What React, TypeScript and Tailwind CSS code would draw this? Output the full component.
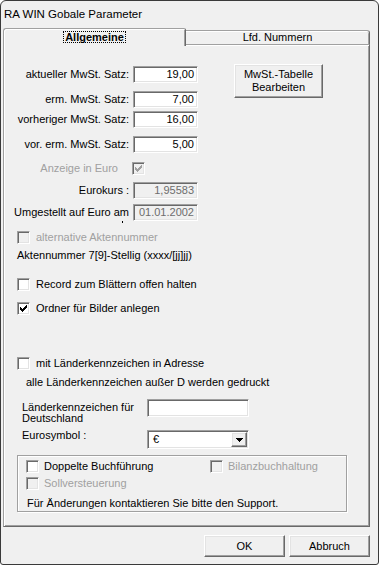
import React from "react";

const sunken =
  "border border-t-[#a0a0a0] border-l-[#a0a0a0] border-b-white border-r-white shadow-[inset_1px_1px_0_#696969,inset_-1px_-1px_0_#e3e3e3]";
const raised =
  "border border-t-white border-l-white border-b-[#696969] border-r-[#696969] shadow-[inset_-1px_-1px_0_#a0a0a0,inset_1px_1px_0_#e3e3e3]";

function Check({ color }: { color: string }) {
  return (
    <svg width="7" height="7" viewBox="0 0 7 7" shapeRendering="crispEdges" fill={color}>
      <rect x="6" y="0" width="1" height="1" />
      <rect x="5" y="1" width="2" height="1" />
      <rect x="0" y="2" width="1" height="1" />
      <rect x="4" y="2" width="3" height="1" />
      <rect x="0" y="3" width="2" height="1" />
      <rect x="3" y="3" width="3" height="1" />
      <rect x="0" y="4" width="5" height="1" />
      <rect x="1" y="5" width="3" height="1" />
      <rect x="2" y="6" width="1" height="1" />
    </svg>
  );
}

function CheckBox({ checked = false, disabled = false }: { checked?: boolean; disabled?: boolean }) {
  return (
    <div
      className={`w-[13px] h-[13px] shrink-0 flex items-center justify-center ${sunken} ${
        disabled ? "bg-[#f0f0f0]" : "bg-white"
      }`}
    >
      {checked && <Check color={disabled ? "#a0a0a0" : "#000000"} />}
    </div>
  );
}

function NumField({ value, disabled = false }: { value: string; disabled?: boolean }) {
  return (
    <div
      className={`ml-[4px] w-[65px] h-[17px] flex items-center justify-end pr-[3px] ${sunken} ${
        disabled ? "bg-[#f0f0f0] text-[#6d6d6d]" : "bg-white text-black"
      }`}
    >
      {value}
    </div>
  );
}

function Row({ label, value, mt, disabled }: { label: string; value: string; mt: string; disabled?: boolean }) {
  return (
    <div className={`flex items-center h-[17px] ${mt}`}>
      <div className="w-[125px] text-right whitespace-nowrap">{label}</div>
      <NumField value={value} disabled={disabled} />
    </div>
  );
}

export default function App() {
  return (
    <div className="w-[379px] h-[565px] bg-[#f0f0f0] border border-[#3a3a3a] rounded-t-[6px] rounded-b-[3px] flex flex-col overflow-hidden text-[11px] leading-[13px] text-black font-['Liberation_Sans',Arial,sans-serif]">
      {/* Title bar */}
      <div className="h-[27px] shrink-0 flex items-center pl-[3px] text-[11.5px]">RA WIN Gobale Parameter</div>

      {/* Tabs */}
      <div className="h-[16px] shrink-0 flex items-end ml-[2px]">
        <div className="relative z-10 self-start h-[18px] w-[183px] bg-[#f0f0f0] border-t border-l border-r border-t-[#a0a0a0] border-l-[#a0a0a0] border-r-[#696969] rounded-tl-[3px] rounded-tr-[2px] shadow-[inset_1px_1px_0_#ffffff,inset_-1px_0_0_#a0a0a0] flex justify-center pt-[2px]">
          <span className="h-[12px] leading-[10px] font-bold border border-dotted border-black px-[1px]">Allgemeine</span>
        </div>
        <div className="h-[14px] w-[184px] bg-[#f0f0f0] border-t border-r border-t-[#a0a0a0] border-r-[#696969] rounded-tr-[3px] shadow-[inset_0_1px_0_#ffffff,inset_-1px_0_0_#a0a0a0] flex items-center justify-center">
          Lfd. Nummern
        </div>
      </div>

      {/* Panel */}
      <div className="ml-[2px] w-[367px] h-[483px] shrink-0 border border-t-[#a0a0a0] border-l-[#a0a0a0] border-r-[#696969] border-b-[#696969] shadow-[inset_1px_1px_0_#ffffff,inset_-1px_-1px_0_#a0a0a0] flex flex-col">
        <div className="flex">
          <div className="flex flex-col pt-[21px]">
            <Row label="aktueller MwSt. Satz:" value="19,00" mt="mt-0" />
            <Row label="erm. MwSt. Satz:" value="7,00" mt="mt-[8px]" />
            <Row label="vorheriger MwSt. Satz:" value="16,00" mt="mt-[3px]" />
            <Row label="vor. erm. MwSt. Satz:" value="5,00" mt="mt-[8px]" />
            <div className="flex items-center h-[13px] mt-[9px]">
              <div className="w-[114px] text-right text-[#a0a0a0] whitespace-nowrap">Anzeige in Euro</div>
              <div className="ml-[14px]">
                <CheckBox checked disabled />
              </div>
            </div>
            <Row label="Eurokurs :" value="1,95583" mt="mt-[7px]" disabled />
            <div className="flex items-center h-[17px] mt-[5px]">
              <div className="relative w-[125px] text-right whitespace-nowrap">
                Umgestellt auf Euro am
                <span className="absolute right-[6px] top-[15px] w-[1px] h-[2px] bg-black"></span>
              </div>
              <NumField value="01.01.2002" disabled />
            </div>
          </div>
          <div className="ml-[36px] mt-[19px]">
            <div className={`w-[89px] h-[34px] flex flex-col items-center justify-center bg-[#f0f0f0] ${raised}`}>
              <span>MwSt.-Tabelle</span>
              <span>Bearbeiten</span>
            </div>
          </div>
        </div>

        <div className="flex flex-col pl-[13px]">
          <div className="flex items-center h-[13px] mt-[10px] gap-[6px]">
            <CheckBox disabled />
            <span className="text-[#a0a0a0]">alternative Aktennummer</span>
          </div>
          <div className="flex items-center h-[13px] mt-[5px]">Aktennummer 7[9]-Stellig (xxxx/[jj]jj)</div>
          <div className="flex items-center h-[13px] mt-[16px] gap-[6px]">
            <CheckBox />
            <span>Record zum Blättern offen halten</span>
          </div>
          <div className="flex items-center h-[13px] mt-[11px] gap-[6px]">
            <CheckBox checked />
            <span>Ordner für Bilder anlegen</span>
          </div>
          <div className="flex items-center h-[13px] mt-[42px] gap-[6px]">
            <CheckBox />
            <span>mit Länderkennzeichen in Adresse</span>
          </div>
          <div className="flex items-center h-[13px] mt-[6px] pl-[9px]">alle Länderkennzeichen außer D werden gedruckt</div>

          <div className="flex mt-[10px]">
            <div className="ml-[5px] w-[125px] pt-[3px] leading-[11px] flex flex-col">
              <span>Länderkennzeichen für</span>
              <span>Deutschland</span>
              <span className="mt-[6px]">Eurosymbol :</span>
            </div>
            <div className="flex flex-col">
              <div className={`w-[102px] h-[18px] bg-white ${sunken}`}></div>
              <div className={`mt-[13px] w-[102px] h-[19px] bg-white p-[1px] flex items-center ${sunken}`}>
                <span className="ml-[4px] flex-1">€</span>
                <div className={`w-[16px] h-[15px] bg-[#f0f0f0] flex items-center justify-center ${raised}`}>
                  <svg width="7" height="4" viewBox="0 0 7 4" shapeRendering="crispEdges" fill="#000">
                    <rect x="0" y="0" width="7" height="1" />
                    <rect x="1" y="1" width="5" height="1" />
                    <rect x="2" y="2" width="3" height="1" />
                    <rect x="3" y="3" width="1" height="1" />
                  </svg>
                </div>
              </div>
            </div>
          </div>

          <div className="mt-[6px] w-[330px] h-[57px] border border-[#a0a0a0] shadow-[1px_1px_0_#ffffff,inset_1px_1px_0_#ffffff] pl-[8px] pt-[4px] flex flex-col">
            <div className="flex items-center h-[13px]">
              <div className="w-[184px] flex items-center gap-[5px]">
                <CheckBox />
                <span>Doppelte Buchführung</span>
              </div>
              <div className="flex items-center gap-[5px]">
                <CheckBox disabled />
                <span className="text-[#a0a0a0]">Bilanzbuchhaltung</span>
              </div>
            </div>
            <div className="flex items-center h-[13px] mt-[4px] gap-[5px]">
              <CheckBox disabled />
              <span className="text-[#a0a0a0]">Sollversteuerung</span>
            </div>
            <div className="flex items-center h-[13px] mt-[7px] pl-[1px]">Für Änderungen kontaktieren Sie bitte den Support.</div>
          </div>
        </div>
      </div>

      {/* Buttons */}
      <div className="mt-[8px] flex justify-end gap-[4px] pr-[8px]">
        <div className={`w-[81px] h-[22px] flex items-center justify-center bg-[#f0f0f0] ${raised}`}>OK</div>
        <div className={`w-[81px] h-[22px] flex items-center justify-center bg-[#f0f0f0] ${raised}`}>Abbruch</div>
      </div>
    </div>
  );
}
